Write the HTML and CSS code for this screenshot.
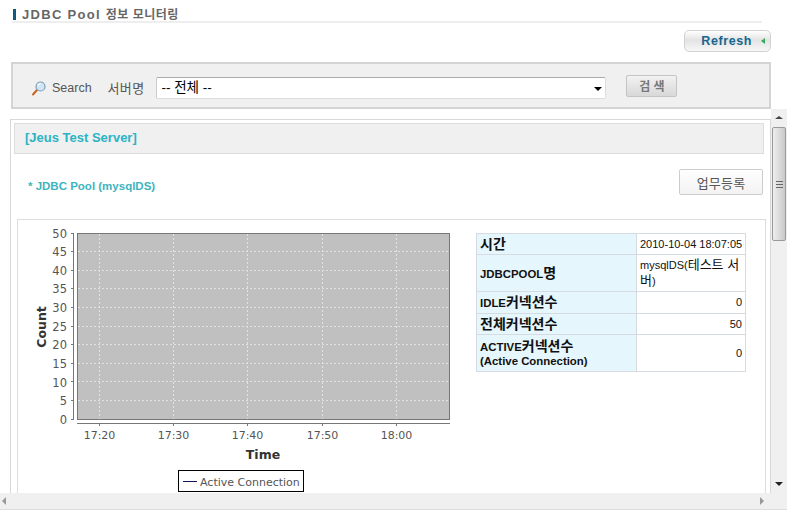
FILE: index.html
```html
<!DOCTYPE html>
<html lang="ko">
<head>
    <meta charset="UTF-8">
    <meta name="viewport" content="width=device-width, initial-scale=1.0">
    <title>JDBC Pool 정보 모니터링</title>
    <link rel="stylesheet" href="styles.css">
</head>
<body>
    <div class="page">
        <h1 class="page-title">JDBC Pool <span class="title-ko">정보 모니터링</span></h1>

        <div class="toolbar">
            <button class="refresh-button">Refresh<span class="refresh-arrow"></span></button>
        </div>

        <div class="search-box">
            <svg class="search-icon" width="16" height="16" viewBox="0 0 16 16">
                <path d="M6 10 L2 14.5" stroke="#c8642a" stroke-width="2" stroke-linecap="round"/>
                <circle cx="9.5" cy="6.5" r="4.5" fill="#cfe6f5" stroke="#7f9fb8" stroke-width="1.2"/>
                <path d="M7 6 A3 3 0 0 1 9.5 3.6" fill="none" stroke="#fff" stroke-width="1.2"/>
            </svg>
            <span class="search-label">Search</span>
            <span class="server-label">서버명</span>
            <div class="select-wrap">
                <select class="server-select">
                    <option>-- 전체 --</option>
                </select>
                <span class="select-arrow"></span>
            </div>
            <button class="search-button">검 색</button>
        </div>

        <div class="viewport">
            <div class="viewport-row">
                <div class="scroll-content">
                    <div class="panel">
                        <div class="server-header">[Jeus Test Server]</div>
                        <div class="pool-row">
                            <span class="pool-name">* JDBC Pool (mysqlDS)</span>
                            <button class="work-button">업무등록</button>
                        </div>
                        <div class="chart-frame">
                            <svg class="chart" width="452" height="273" viewBox="18 220 452 273">
                                <rect x="77.5" y="233.5" width="372" height="186" fill="#c0c0c0" stroke="#777"/>
                                <g class="grid">
                                    <path d="M99.5 234V419 M173.5 234V419 M247.5 234V419 M322.5 234V419 M396.5 234V419"/>
                                    <path d="M78 251.5H449 M78 270.5H449 M78 288.5H449 M78 307.5H449 M78 326.5H449 M78 344.5H449 M78 363.5H449 M78 381.5H449 M78 400.5H449"/>
                                </g>
                                <path class="axis" d="M73.5 233V420 M71 233.5H73.5 M71 251.5H73.5 M71 270.5H73.5 M71 288.5H73.5 M71 307.5H73.5 M71 326.5H73.5 M71 344.5H73.5 M71 363.5H73.5 M71 381.5H73.5 M71 400.5H73.5 M71 419.5H73.5"/>
                                <path class="axis" d="M77 423.5H450 M99.5 423V426 M173.5 423V426 M247.5 423V426 M322.5 423V426 M396.5 423V426"/>
                                <g class="tick-y">
                                    <text x="67" y="238">50</text>
                                    <text x="67" y="256">45</text>
                                    <text x="67" y="275">40</text>
                                    <text x="67" y="293">35</text>
                                    <text x="67" y="312">30</text>
                                    <text x="67" y="331">25</text>
                                    <text x="67" y="349">20</text>
                                    <text x="67" y="368">15</text>
                                    <text x="67" y="387">10</text>
                                    <text x="67" y="405">5</text>
                                    <text x="67" y="424">0</text>
                                </g>
                                <g class="tick-x">
                                    <text x="99.5" y="439">17:20</text>
                                    <text x="173.5" y="439">17:30</text>
                                    <text x="247.5" y="439">17:40</text>
                                    <text x="322.5" y="439">17:50</text>
                                    <text x="396.5" y="439">18:00</text>
                                </g>
                                <text class="axis-title" x="263" y="459">Time</text>
                                <text class="axis-title" transform="translate(46 327) rotate(-90)">Count</text>
                                <rect x="178.5" y="470.5" width="125" height="21" fill="#fff" stroke="#000"/>
                                <path d="M183 481.5H197" stroke="#14145c"/>
                                <text class="legend-text" x="200" y="486">Active Connection</text>
                            </svg>
                            <table class="info-table">
                                <tr class="row-1">
                                    <th class="big">시간</th>
                                    <td class="date">2010-10-04 18:07:05</td>
                                </tr>
                                <tr class="row-2">
                                    <th>JDBCPOOL<span class="big">명</span></th>
                                    <td>mysqlDS(<span class="td-ko">테스트 서버</span>)</td>
                                </tr>
                                <tr class="row-3">
                                    <th>IDLE<span class="big">커넥션수</span></th>
                                    <td class="num">0</td>
                                </tr>
                                <tr class="row-4">
                                    <th class="big">전체커넥션수</th>
                                    <td class="num">50</td>
                                </tr>
                                <tr class="row-5">
                                    <th>ACTIVE<span class="big">커넥션수</span><br>(Active Connection)</th>
                                    <td class="num">0</td>
                                </tr>
                            </table>
                        </div>
                    </div>
                </div>
                <div class="vbar">
                    <span class="arrow-up"></span>
                    <div class="vbar-thumb"><span class="grip"></span></div>
                    <span class="arrow-down"></span>
                </div>
            </div>
            <div class="hbar">
                <span class="arrow-left"></span>
                <span class="arrow-right"></span>
            </div>
        </div>
    </div>
</body>
</html>
```

FILE: styles.css
```css
body {
    margin: 0;
    background-color: #fff;
    font-family: "Liberation Sans", "Noto Sans CJK KR", sans-serif;
}

.page {
    width: 787px;
    height: 511px;
    overflow: hidden;
}

.page-title {
    margin: 8px 25px 0 12px;
    height: 13px;
    padding-left: 10px;
    border-bottom: 2px solid #eee;
    font-size: 13px;
    line-height: 13px;
    font-weight: bold;
    letter-spacing: 1.3px;
    color: #666;
    background: linear-gradient(#11597f, #11597f) 1px 1px / 3px 11px no-repeat;
}

.title-ko {
    font-size: 12px;
    letter-spacing: 0.5px;
}

.toolbar {
    display: flex;
    justify-content: flex-end;
    padding: 7px 16px 0 0;
    height: 32px;
    box-sizing: content-box;
}

.refresh-button {
    display: flex;
    align-items: center;
    justify-content: flex-end;
    width: 87px;
    height: 22px;
    padding: 0 5px 0 0;
    border: 1px solid #d2d2d2;
    border-radius: 5px;
    background: linear-gradient(#fff, #e3e3e3 45%, #f7f7f7);
    font-family: "Liberation Sans", sans-serif;
    font-size: 12.5px;
    font-weight: bold;
    letter-spacing: 0.6px;
    color: #17668f;
}

.refresh-arrow {
    margin-left: 9px;
    border-style: solid;
    border-width: 3px 4px 3px 0;
    border-color: transparent #2fae5a transparent transparent;
}

.search-box {
    display: flex;
    align-items: center;
    width: 760px;
    height: 47px;
    margin-left: 11px;
    box-sizing: border-box;
    padding: 4px 0 0 18px;
    border: 2px solid #d4d4d4;
    background-color: #f0f0f0;
}

.search-icon {
    width: 16px;
    height: 16px;
    flex: none;
}

.search-label {
    margin-left: 5px;
    font-size: 12.5px;
    color: #555;
}

.server-label {
    margin-left: 16px;
    font-size: 13px;
    letter-spacing: 0.3px;
    color: #555;
}

.select-wrap {
    position: relative;
    margin-left: 12px;
    width: 450px;
    height: 22px;
}

.server-select {
    appearance: none;
    display: block;
    width: 100%;
    height: 100%;
    padding: 0 0 0 4px;
    border: 1px solid #ddd;
    border-top-color: #aaa;
    border-left-color: #ccc;
    border-radius: 2px;
    background-color: #fff;
    font-family: "Liberation Sans", "Noto Sans CJK KR", sans-serif;
    font-size: 13.5px;
    color: #000;
}

.select-arrow {
    position: absolute;
    right: 4px;
    top: 10px;
    border-style: solid;
    border-width: 4px 4px 0 4px;
    border-color: #000 transparent transparent transparent;
}

.search-button {
    width: 51px;
    height: 22px;
    margin: -4px 0 0 20px;
    padding: 0;
    border: 1px solid #c4c4c4;
    border-radius: 2px;
    background: linear-gradient(#f2f2f2, #d8d8d8);
    font-family: "Noto Sans CJK KR", sans-serif;
    font-size: 12px;
    font-weight: bold;
    color: #777;
}

.viewport {
    height: 400px;
}

.viewport-row {
    display: flex;
    height: 384px;
}

.scroll-content {
    width: 771px;
    overflow: hidden;
    padding-top: 10px;
    box-sizing: border-box;
}

.panel {
    width: 761px;
    height: 400px;
    margin-left: 10px;
    box-sizing: border-box;
    padding: 3px 0 0 3px;
    border: 1px solid #d8d8d8;
    border-bottom: 0;
}

.server-header {
    width: 750px;
    height: 31px;
    box-sizing: border-box;
    padding-left: 10px;
    border: 1px solid #ddd;
    background-color: #f0f0f0;
    font-size: 13px;
    line-height: 27px;
    font-weight: bold;
    color: #2bb3c6;
}

.pool-row {
    display: flex;
    justify-content: space-between;
    align-items: flex-start;
    width: 749px;
    height: 65px;
    padding-top: 15px;
    box-sizing: border-box;
}

.pool-name {
    margin: 11px 0 0 14px;
    font-size: 11.5px;
    font-weight: bold;
    color: #3db4bf;
}

.work-button {
    width: 84px;
    height: 26px;
    padding: 0;
    border: 1px solid #ccc;
    border-radius: 2px;
    background: linear-gradient(#fff, #f3f3f3);
    font-family: "Noto Sans CJK KR", sans-serif;
    font-size: 13px;
    letter-spacing: 0.2px;
    color: #555;
}

.chart-frame {
    display: flex;
    align-items: flex-start;
    width: 749px;
    height: 300px;
    margin-left: 3px;
    box-sizing: border-box;
    border: 1px solid #ddd;
    border-bottom: 0;
}

.chart {
    flex: none;
}

.grid path {
    fill: none;
    stroke: #e2e2e2;
    stroke-dasharray: 2 2;
}

.axis {
    fill: none;
    stroke: #777;
}

.tick-y text {
    font-family: "DejaVu Sans", sans-serif;
    font-size: 11.5px;
    text-anchor: end;
    fill: #555;
}

.tick-x text {
    font-family: "DejaVu Sans", sans-serif;
    font-size: 11px;
    text-anchor: middle;
    fill: #555;
}

.axis-title {
    font-family: "DejaVu Sans", sans-serif;
    font-size: 12.5px;
    font-weight: bold;
    text-anchor: middle;
    fill: #333;
}

.legend-text {
    font-family: "DejaVu Sans", sans-serif;
    font-size: 11px;
    fill: #555;
}

.info-table {
    flex: none;
    width: 270px;
    margin: 13px 0 0 6px;
    border-collapse: collapse;
    table-layout: fixed;
    font-size: 11px;
    color: #111;
}

.info-table th,
.info-table td {
    border: 1px solid #d5dbe0;
    padding: 0 3px;
}

.info-table th {
    width: 153px;
    background-color: #e6f6fd;
    font-size: 11.4px;
    font-weight: bold;
    text-align: left;
    line-height: 14px;
}

.info-table td {
    line-height: 15px;
    padding-right: 3px;
}

.info-table .date {
    white-space: nowrap;
}

.info-table .num {
    text-align: right;
}

.info-table .big {
    font-size: 14px;
}

.td-ko {
    font-size: 13px;
}

.row-1 { height: 21px; }
.row-2 { height: 37px; }
.row-3 { height: 22px; }
.row-4 { height: 21px; }
.row-5 { height: 37px; }

.vbar {
    position: relative;
    width: 16px;
    background-color: #f0f0f0;
}

.vbar-thumb {
    position: absolute;
    left: 1px;
    top: 18px;
    width: 14px;
    height: 114px;
    box-sizing: border-box;
    display: flex;
    align-items: center;
    justify-content: center;
    border: 1px solid #999;
    border-radius: 2px;
    background: linear-gradient(to right, #eee, #c9c9c9);
}

.grip {
    width: 7px;
    height: 7px;
    background: repeating-linear-gradient(#666 0 1px, transparent 1px 3px);
}

.arrow-up {
    position: absolute;
    left: 4px;
    top: 7px;
    border-style: solid;
    border-width: 0 4px 3px 4px;
    border-color: transparent transparent #444 transparent;
}

.arrow-down {
    position: absolute;
    left: 4px;
    bottom: 7px;
    border-style: solid;
    border-width: 4px 4px 0 4px;
    border-color: #222 transparent transparent transparent;
}

.hbar {
    display: flex;
    align-items: center;
    justify-content: space-between;
    height: 16px;
    padding: 0 23px 0 2px;
    background-color: #f0f0f0;
    border-bottom: 1px solid #ddd;
}

.arrow-left {
    border-style: solid;
    border-width: 4px 4px 4px 0;
    border-color: transparent #999 transparent transparent;
}

.arrow-right {
    border-style: solid;
    border-width: 4px 0 4px 4px;
    border-color: transparent transparent transparent #999;
}
```
